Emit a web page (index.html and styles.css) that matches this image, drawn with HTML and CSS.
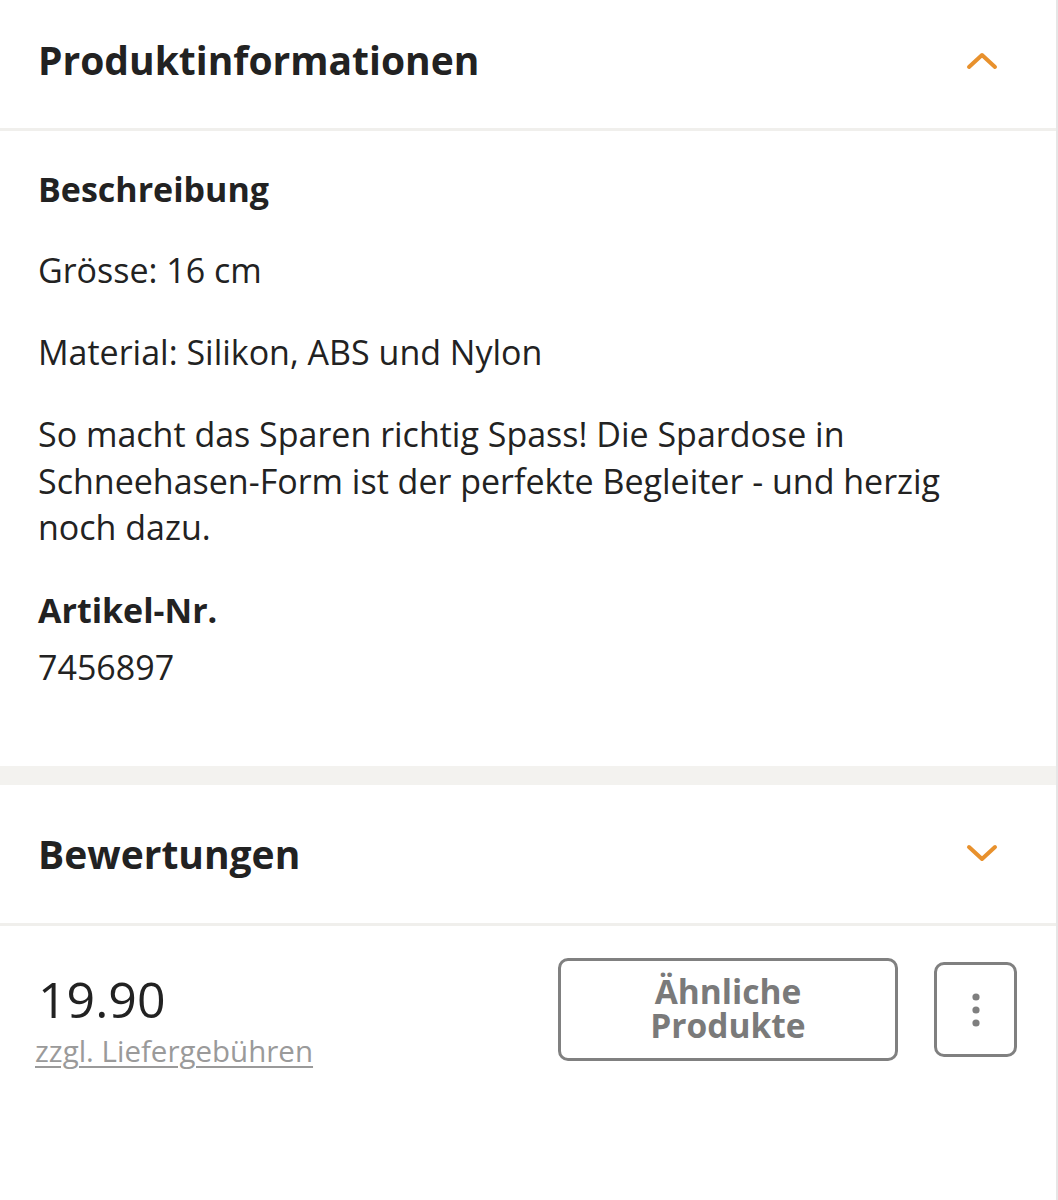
FILE: index.html
```html
<!DOCTYPE html>
<html lang="de">
<head>
<meta charset="utf-8">
<link rel="stylesheet" href="styles.css">
</head>
<body>
<div class="page">
  <section class="acc">
    <div class="acc-head">
      <h2 class="acc-title">Produktinformationen</h2>
      <svg class="chev" width="32" height="20" viewBox="0 0 32 20"><path d="M3 17 L16 5 L29 17" fill="none" stroke="#e8912d" stroke-width="4" stroke-linecap="round" stroke-linejoin="round"/></svg>
    </div>
    <div class="acc-body">
      <h3 class="sub">Beschreibung</h3>
      <p class="txt">Grösse: 16 cm</p>
      <p class="txt">Material: Silikon, ABS und Nylon</p>
      <p class="txt para">So macht das Sparen richtig Spass! Die Spardose in Schneehasen-Form ist der perfekte Begleiter - und herzig noch dazu.</p>
      <h3 class="sub sub-art">Artikel-Nr.</h3>
      <p class="txt art">7456897</p>
    </div>
  </section>
  <div class="band"></div>
  <section class="acc">
    <div class="acc-head acc-head2">
      <h2 class="acc-title">Bewertungen</h2>
      <svg class="chev" width="32" height="20" viewBox="0 0 32 20"><path d="M3 3 L16 15 L29 3" fill="none" stroke="#e8912d" stroke-width="4" stroke-linecap="round" stroke-linejoin="round"/></svg>
    </div>
  </section>
  <div class="buybar">
    <div class="price-col">
      <div class="price">19.90</div>
      <a class="fee">zzgl. Liefergebühren</a>
    </div>
    <div class="actions">
      <button class="btn-similar"><span class="bl">Ähnliche</span><span class="bl">Produkte</span></button>
      <button class="btn-more" aria-label="Mehr">
        <svg width="10" height="34" viewBox="0 0 10 34"><circle cx="5" cy="4" r="3.6" fill="#7f7f7f"/><circle cx="5" cy="17" r="3.6" fill="#7f7f7f"/><circle cx="5" cy="30" r="3.6" fill="#7f7f7f"/></svg>
      </button>
    </div>
  </div>
</div>
</body>
</html>
```

FILE: styles.css
```css
* { box-sizing: border-box; }
html, body { margin: 0; padding: 0; background: #fff; }
body { font-family: "Open Sans", "Liberation Sans", sans-serif; color: #222; }
.page { width: 1058px; border-right: 2px solid #e6e6e6; min-height: 1200px; }
.acc-head {
  height: 131px;
  display: flex;
  align-items: center;
  justify-content: space-between;
  padding: 0 58px 8px 38px;
  border-bottom: 3px solid #f0efec;
}
.acc-head2 { height: 141px; padding-bottom: 0; }
.acc-title { margin: 0; font-size: 39px; font-weight: 700; color: #222; line-height: 50px; }
.chev { display: block; }
.acc-body { padding: 35px 38px 76px; }
.sub { margin: 0 0 35px; font-size: 34px; font-weight: 700; line-height: 46px; color: #222; }
.txt { margin: 0 0 35.5px; font-size: 34px; line-height: 46.5px; font-weight: 400; color: #222; }
.para { margin-bottom: 36.5px; }
.sub-art { margin: 0 0 10.75px; }
.art { margin: 0; }
.band { height: 19px; background: #f3f2ef; }
.buybar {
  display: flex;
  justify-content: space-between;
  align-items: flex-start;
  padding: 32px 39px 0 35px;
}
.price-col { display: flex; flex-direction: column; padding-top: 11px; }
.price { font-size: 50px; line-height: 60px; font-weight: 500; color: #222; padding-left: 3px; }
.fee { margin-top: 2px; font-size: 29.5px; line-height: 40px; color: #9a9a9a; text-decoration: underline; text-underline-offset: 4px; text-decoration-thickness: 2px; }
.actions { display: flex; align-items: center; gap: 36px; }
.btn-similar {
  width: 340px; height: 103px;
  border: 3.5px solid #808080; border-radius: 10px; background: #fff;
  font-family: "Open Sans", "Liberation Sans", sans-serif;
  font-size: 33.5px; font-weight: 700; color: #7a7a7a;
  display: flex; flex-direction: column; align-items: center; justify-content: center;
  padding: 0 0 4px;
}
.bl { display: block; line-height: 34px; height: 34px; }
.btn-more {
  width: 83px; height: 95px;
  border: 3.5px solid #808080; border-radius: 10px; background: #fff;
  display: flex; align-items: center; justify-content: center; padding: 0;
}
```
